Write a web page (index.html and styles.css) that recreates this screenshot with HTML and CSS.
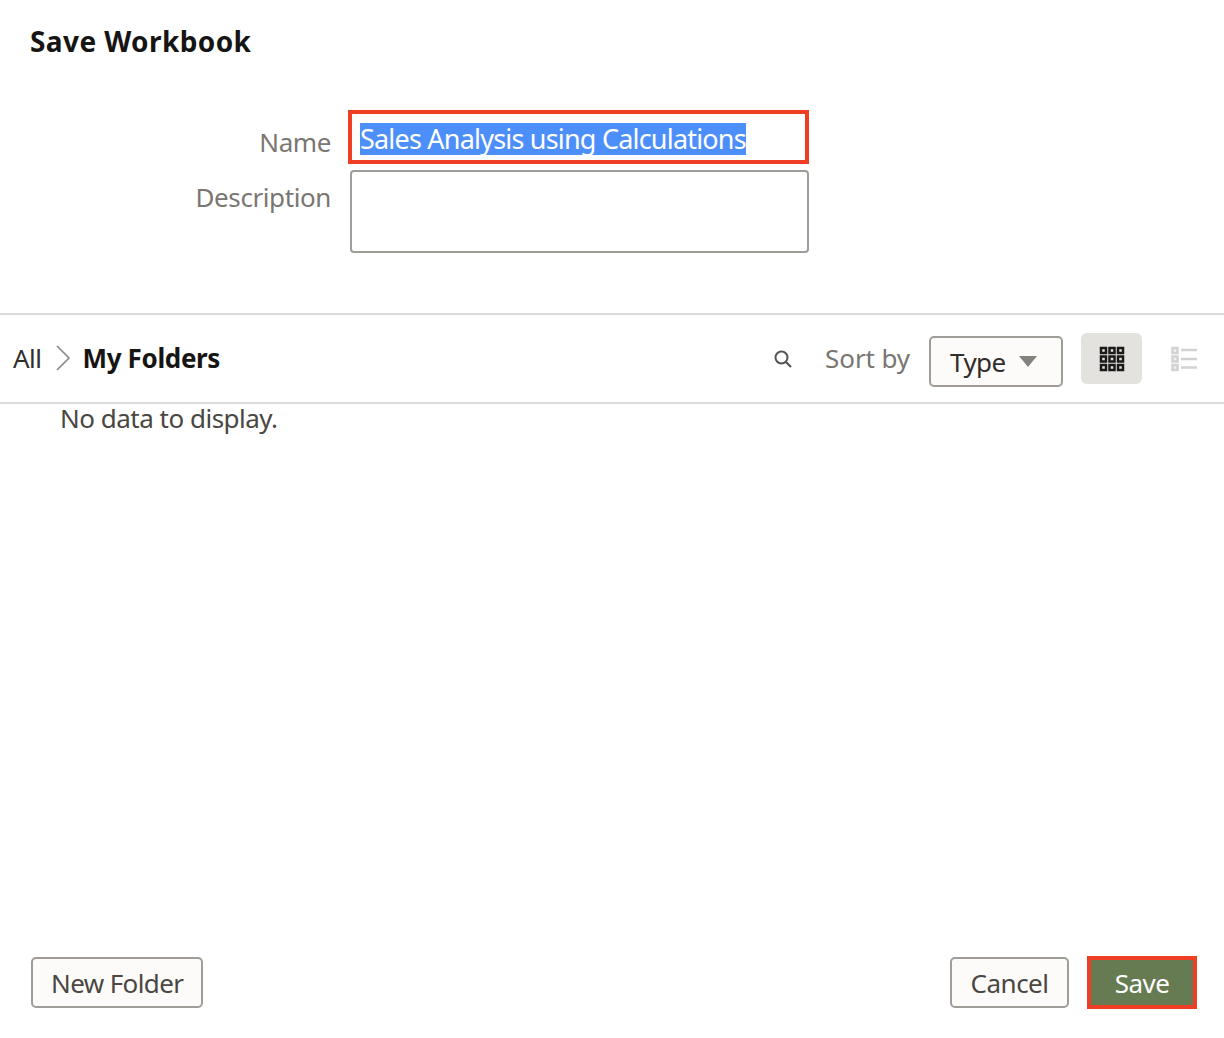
FILE: index.html
```html
<!DOCTYPE html>
<html lang="en">
<head>
    <meta charset="UTF-8">
    <title>Save Workbook</title>
    <link rel="stylesheet" href="styles.css">
</head>
<body>
    <div class="dialog">
        <h1 class="title">Save Workbook</h1>

        <div class="form">
            <div class="form-row name-row">
                <label class="label">Name</label>
                <div class="name-box"><span class="selected">Sales Analysis using Calculations</span></div>
            </div>
            <div class="form-row desc-row">
                <label class="label">Description</label>
                <div class="desc-box"></div>
            </div>
        </div>

        <div class="toolbar">
            <div class="crumbs">
                <span class="crumb">All</span>
                <svg class="chevron" width="16" height="26" viewBox="0 0 16 26"><path d="M2 1 L14 13 L2 25" fill="none" stroke="#8b8781" stroke-width="1.6"/></svg>
                <span class="crumb-current">My Folders</span>
            </div>
            <div class="tools">
                <svg class="search-icon" width="20" height="20" viewBox="0 0 20 20"><circle cx="8.5" cy="8.5" r="6" fill="none" stroke="#56524d" stroke-width="2"/><path d="M13 13 L18 18" stroke="#56524d" stroke-width="2.200"/></svg>
                <span class="sort-label">Sort by</span>
                <div class="sort-select">
                    <span>Type</span>
                    <span class="caret"></span>
                </div>
                <div class="view-btn active">
                    <svg width="26" height="26" viewBox="0 0 26 26">
                        <g fill="#e3e2df" stroke="#1b1a18" stroke-width="2.500">
                            <rect x="2" y="2" width="5" height="5"/><rect x="10.500" y="2" width="5" height="5"/><rect x="19" y="2" width="5" height="5"/>
                            <rect x="2" y="10.500" width="5" height="5"/><rect x="10.500" y="10.500" width="5" height="5"/><rect x="19" y="10.500" width="5" height="5"/>
                            <rect x="2" y="19" width="5" height="5"/><rect x="10.500" y="19" width="5" height="5"/><rect x="19" y="19" width="5" height="5"/>
                        </g>
                    </svg>
                </div>
                <div class="view-btn">
                    <svg width="26" height="26" viewBox="0 0 26 26">
                        <g fill="#f1f1f0" stroke="#d3d2d0" stroke-width="2.500">
                            <rect x="1.500" y="2" width="5" height="5"/><rect x="1.500" y="10.500" width="5" height="5"/><rect x="1.500" y="19" width="5" height="5"/>
                        </g>
                        <path d="M10 4 H26 M10 13 H26 M10 21.500 H26" stroke="#d3d2d0" stroke-width="2.500"/>
                    </svg>
                </div>
            </div>
        </div>

        <p class="empty">No data to display.</p>

        <div class="footer">
            <button class="btn btn-folder">New Folder</button>
            <div class="footer-right">
                <button class="btn">Cancel</button>
                <button class="btn btn-save">Save</button>
            </div>
        </div>
    </div>
</body>
</html>
```

FILE: styles.css
```css
body {
    margin: 0;
    background: #fff;
    font-family: "Noto Sans", "Open Sans", Arial, sans-serif;
    color: #312d2a;
}

.dialog {
    height: 1038px;
    display: flex;
    flex-direction: column;
    box-sizing: border-box;
}

.title {
    margin: 0;
    padding: 23px 0 0 30px;
    height: 86px;
    box-sizing: border-box;
    font-size: 28px;
    line-height: 36px;
    font-weight: 700;
    letter-spacing: 0.4px;
    color: #161513;
}

.form {
    height: 229px;
    padding-top: 24px;
    box-sizing: border-box;
    border-bottom: 2px solid #dcdbd8;
}

.form-row {
    display: flex;
}

.label {
    width: 331px;
    text-align: right;
    font-size: 26px;
    letter-spacing: -0.4px;
    color: #7a7672;
}

.name-row {
    height: 60px;
}

.name-row .label {
    line-height: 64px;
}

.name-box {
    margin-left: 17px;
    width: 461px;
    height: 54px;
    box-sizing: border-box;
    border: 4px solid #ee3f25;
    padding: 9px 0 0 8px;
}

.selected {
    display: inline-block;
    height: 32px;
    line-height: 31px;
    font-size: 27px;
    letter-spacing: -0.8px;
    background: #4d8ffa;
    color: #fff;
    white-space: nowrap;
}

.desc-row .label {
    line-height: 54px;
}

.desc-box {
    margin-left: 18.5px;
    width: 459px;
    height: 83px;
    box-sizing: border-box;
    border: 2px solid #a09d98;
    border-radius: 4px;
}

.toolbar {
    height: 89px;
    box-sizing: border-box;
    border-bottom: 2px solid #dcdbd8;
    display: flex;
    align-items: center;
    justify-content: space-between;
    padding: 0 10px 0 13px;
}

.crumbs {
    display: flex;
    align-items: center;
    padding-bottom: 1px;
}

.crumb {
    font-size: 26px;
    letter-spacing: -0.5px;
}

.chevron {
    margin: 0 12px 0 13px;
}

.crumb-current {
    font-size: 26px;
    font-weight: 700;
    letter-spacing: -0.35px;
    color: #161513;
}

.tools {
    display: flex;
    align-items: center;
}

.search-icon {
    margin-right: 32px;
}

.sort-label {
    font-size: 26px;
    letter-spacing: -0.1px;
    color: #7a7672;
    margin-right: 19px;
    padding-bottom: 2px;
}

.sort-select {
    width: 134px;
    height: 51px;
    margin-top: 6px;
    box-sizing: border-box;
    border: 2px solid #a09d98;
    border-radius: 5px;
    background: #fcfbfa;
    display: flex;
    align-items: center;
    padding-left: 19px;
    font-size: 26px;
    letter-spacing: -0.55px;
}

.caret {
    margin: 0 0 0 13px;
    border-left: 9px solid transparent;
    border-right: 9px solid transparent;
    border-top: 11px solid #85817c;
}

.view-btn {
    width: 61px;
    height: 51px;
    border-radius: 6px;
    display: flex;
    align-items: center;
    justify-content: center;
    margin-left: 18px;
}

.view-btn.active {
    background: #e3e2df;
}

.view-btn + .view-btn {
    margin-left: 11px;
}

.empty {
    margin: 0;
    padding-left: 60px;
    font-size: 26px;
    line-height: 28px;
    letter-spacing: -0.5px;
    color: #4a4642;
}

.footer {
    margin-top: auto;
    display: flex;
    align-items: center;
    justify-content: space-between;
    padding: 0 27px 29px 31px;
}

.footer-right {
    display: flex;
    align-items: center;
    gap: 18px;
}

.btn {
    height: 51px;
    box-sizing: border-box;
    padding: 0 18.5px;
    border: 2px solid #a09d98;
    border-radius: 5px;
    background: #fcfbfa;
    font-family: inherit;
    font-size: 26px;
    letter-spacing: -0.5px;
    color: #4a4642;
}

.btn-folder {
    padding: 0 18px;
    letter-spacing: -0.6px;
}

.btn-save {
    width: 110px;
    height: 53px;
    border: 4px solid #ee3f25;
    border-radius: 0;
    background: #667b52;
    color: #fff;
    padding: 0;
}
```
